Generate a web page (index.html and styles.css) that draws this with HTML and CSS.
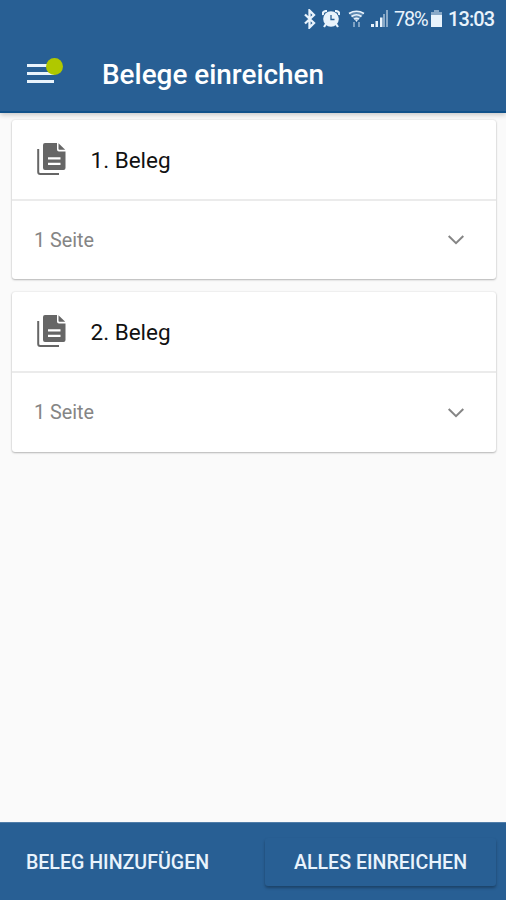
FILE: index.html
```html
<!DOCTYPE html>
<html lang="de">
<head>
<meta charset="utf-8">
<title>Belege einreichen</title>
<link rel="stylesheet" href="styles.css">
</head>
<body>
<div class="app">
  <header class="topbar">
    <div class="status">
      <svg class="bluetooth" width="12" height="20" viewBox="0 0 12 20"><path d="M1 5.500l9 8.500-4.500 4.500v-17L10 6l-9 8.500" fill="none" stroke="currentColor" stroke-width="2.300"/></svg>
      <svg class="alarm" width="18" height="18" viewBox="0 0 18 18"><path d="M1 5Q0 1 5 1M17 5Q18 1 13 1M4 14l-2 3M14 14l2 3" fill="none" stroke="currentColor" stroke-width="2.200"/><circle cx="9" cy="9" r="7.800" fill="currentColor"/><path d="M9 5v4.500h3.500" fill="none" stroke="#285f94" stroke-width="1.300"/></svg>
      <svg class="wifi" width="17" height="18" viewBox="0 0 17 18"><path d="M1 3.500Q8.500-1 16 3.500L8.500 12z" fill="currentColor" opacity=".3"/><path d="M1 3.500Q8.500-1 16 3.500M3.500 6.500Q8.500 3 13.500 6.500M6 9.200Q8.500 7.300 11 9.200" fill="none" stroke="currentColor" stroke-width="1.600"/><path d="M7 9.500h3L8.500 12z" fill="currentColor"/><path d="M6 12v5M11 12v5" stroke="currentColor" stroke-width="2" opacity=".45"/></svg>
      <svg class="signal" width="18" height="17" viewBox="0 0 18 17"><path d="M0 14h3v3H0zM4.500 11h2.500v6H4.500zM9 7.500h2.500V17H9z" fill="currentColor"/><path d="M12 4h2v13h-2zM15 0h2v17h-2z" fill="currentColor" opacity=".5"/></svg>
      <span class="percent">78%</span>
      <svg class="battery" width="11" height="17" viewBox="0 0 11 17"><path d="M3 0h5v2h3v3H0V2h3z" fill="currentColor" opacity=".5"/><path d="M0 5h11v12H0z" fill="currentColor"/></svg>
      <span class="clock">13:03</span>
    </div>
    <div class="titlebar">
      <div class="menu"><i></i><i></i><i></i><b class="badge"></b></div>
      <h1>Belege einreichen</h1>
    </div>
  </header>
  <main class="list">
    <section class="card">
      <div class="row head">
        <svg class="docs" width="30" height="34" viewBox="0 0 30 34"><path d="M1.200 6v23Q1.200 31 3.200 31H22" fill="none" stroke="currentColor" stroke-width="2"/><path fill-rule="evenodd" d="M8 0H20V6.500Q20 8.500 22 8.500H28.500V25Q28.500 27 26.500 27H8Q6 27 6 25V2Q6 0 8 0zM11 14.200v2.200h12.500V14.200zM11 19.800v2.200h12.500v-2.200z" fill="currentColor"/><path d="M21.500 .3L28.200 6.800H22.500Q21.500 6.800 21.500 5.800z" fill="currentColor"/></svg>
        <h2>1. Beleg</h2>
      </div>
      <div class="row detail">
        <span>1 Seite</span>
        <svg class="chevron" width="18" height="12" viewBox="0 0 18 12"><path d="M1.700 2L9 9.200 16.300 2" fill="none" stroke="currentColor" stroke-width="2"/></svg>
      </div>
    </section>
    <section class="card">
      <div class="row head">
        <svg class="docs" width="30" height="34" viewBox="0 0 30 34"><path d="M1.200 6v23Q1.200 31 3.200 31H22" fill="none" stroke="currentColor" stroke-width="2"/><path fill-rule="evenodd" d="M8 0H20V6.500Q20 8.500 22 8.500H28.500V25Q28.500 27 26.500 27H8Q6 27 6 25V2Q6 0 8 0zM11 14.200v2.200h12.500V14.200zM11 19.800v2.200h12.500v-2.200z" fill="currentColor"/><path d="M21.500 .3L28.200 6.800H22.500Q21.500 6.800 21.500 5.800z" fill="currentColor"/></svg>
        <h2>2. Beleg</h2>
      </div>
      <div class="row detail">
        <span>1 Seite</span>
        <svg class="chevron" width="18" height="12" viewBox="0 0 18 12"><path d="M1.700 2L9 9.200 16.300 2" fill="none" stroke="currentColor" stroke-width="2"/></svg>
      </div>
    </section>
  </main>
  <footer class="actions">
    <button class="flat">BELEG HINZUFÜGEN</button>
    <button class="raised">ALLES EINREICHEN</button>
  </footer>
</div>
</body>
</html>
```
FILE: styles.css
```css
* { box-sizing: border-box; }
body { margin: 0; font-family: Roboto, "Liberation Sans", sans-serif; background: #fafafa; }
.app { height: 900px; display: flex; flex-direction: column; }
h1, h2 { margin: 0; white-space: nowrap; }
svg { display: block; flex: none; }

.topbar { height: 113px; background: #285f94; color: #fff; border-bottom: 2px solid #10518a; box-shadow: 0 2px 5px rgba(0, 0, 0, .2); }
.status { height: 37px; display: flex; align-items: center; justify-content: flex-end; padding-right: 12px; color: #e9f3fc; font-size: 20px; font-weight: 500; white-space: nowrap; }
.alarm { margin-left: 6px; }
.wifi { margin-left: 8px; }
.signal { margin-left: 6px; }
.percent { width: 33px; margin-left: 5px; font-weight: 400; letter-spacing: -1.200px; }
.battery { margin-left: 4px; }
.clock { width: 46px; margin-left: 6px; letter-spacing: -.9px; }

.titlebar { height: 75px; display: flex; align-items: center; padding-left: 27px; }
.menu { position: relative; width: 27px; display: flex; flex-direction: column; gap: 5px; margin-top: -2px; }
.menu i { height: 3px; background: #e9f3fc; }
.badge { position: absolute; left: 18.500px; top: -6px; width: 17px; height: 17px; border-radius: 50%; background: #b0c800; }
h1 { margin-left: 48px; font-size: 27.900px; font-weight: 500; }

.list { flex: 1; padding: 7px 10px 0 12px; display: flex; flex-direction: column; gap: 13px; }
.card { background: #fff; border-radius: 3px; box-shadow: 0 1px 2px rgba(0, 0, 0, .25), 0 0 2px rgba(0, 0, 0, .12); }
.row { display: flex; align-items: center; }
.head { height: 81px; padding-left: 25px; border-bottom: 2px solid #ebebeb; }
.docs { color: #666; }
h2 { margin-left: 23.500px; font-size: 22.500px; font-weight: 400; color: #111; }
.detail { height: 78px; padding: 0 31px 0 22px; justify-content: space-between; color: #858585; font-size: 19.800px; }
.card + .card .detail { height: 79px; }
.chevron { color: #858585; }

.actions { height: 78px; background: #285f94; border-top: 1px solid #507da9; display: flex; align-items: center; justify-content: space-between; padding: 1px 10px 0 12px; }
button { height: 48px; border: 0; background: #285f94; color: #e9f3fc; font: 500 19.600px Roboto, sans-serif; white-space: nowrap; padding: 0; }
.flat { width: 211px; }
.raised { width: 231px; border-radius: 3px; box-shadow: 0 2px 3px rgba(0, 0, 0, .3); }
```
